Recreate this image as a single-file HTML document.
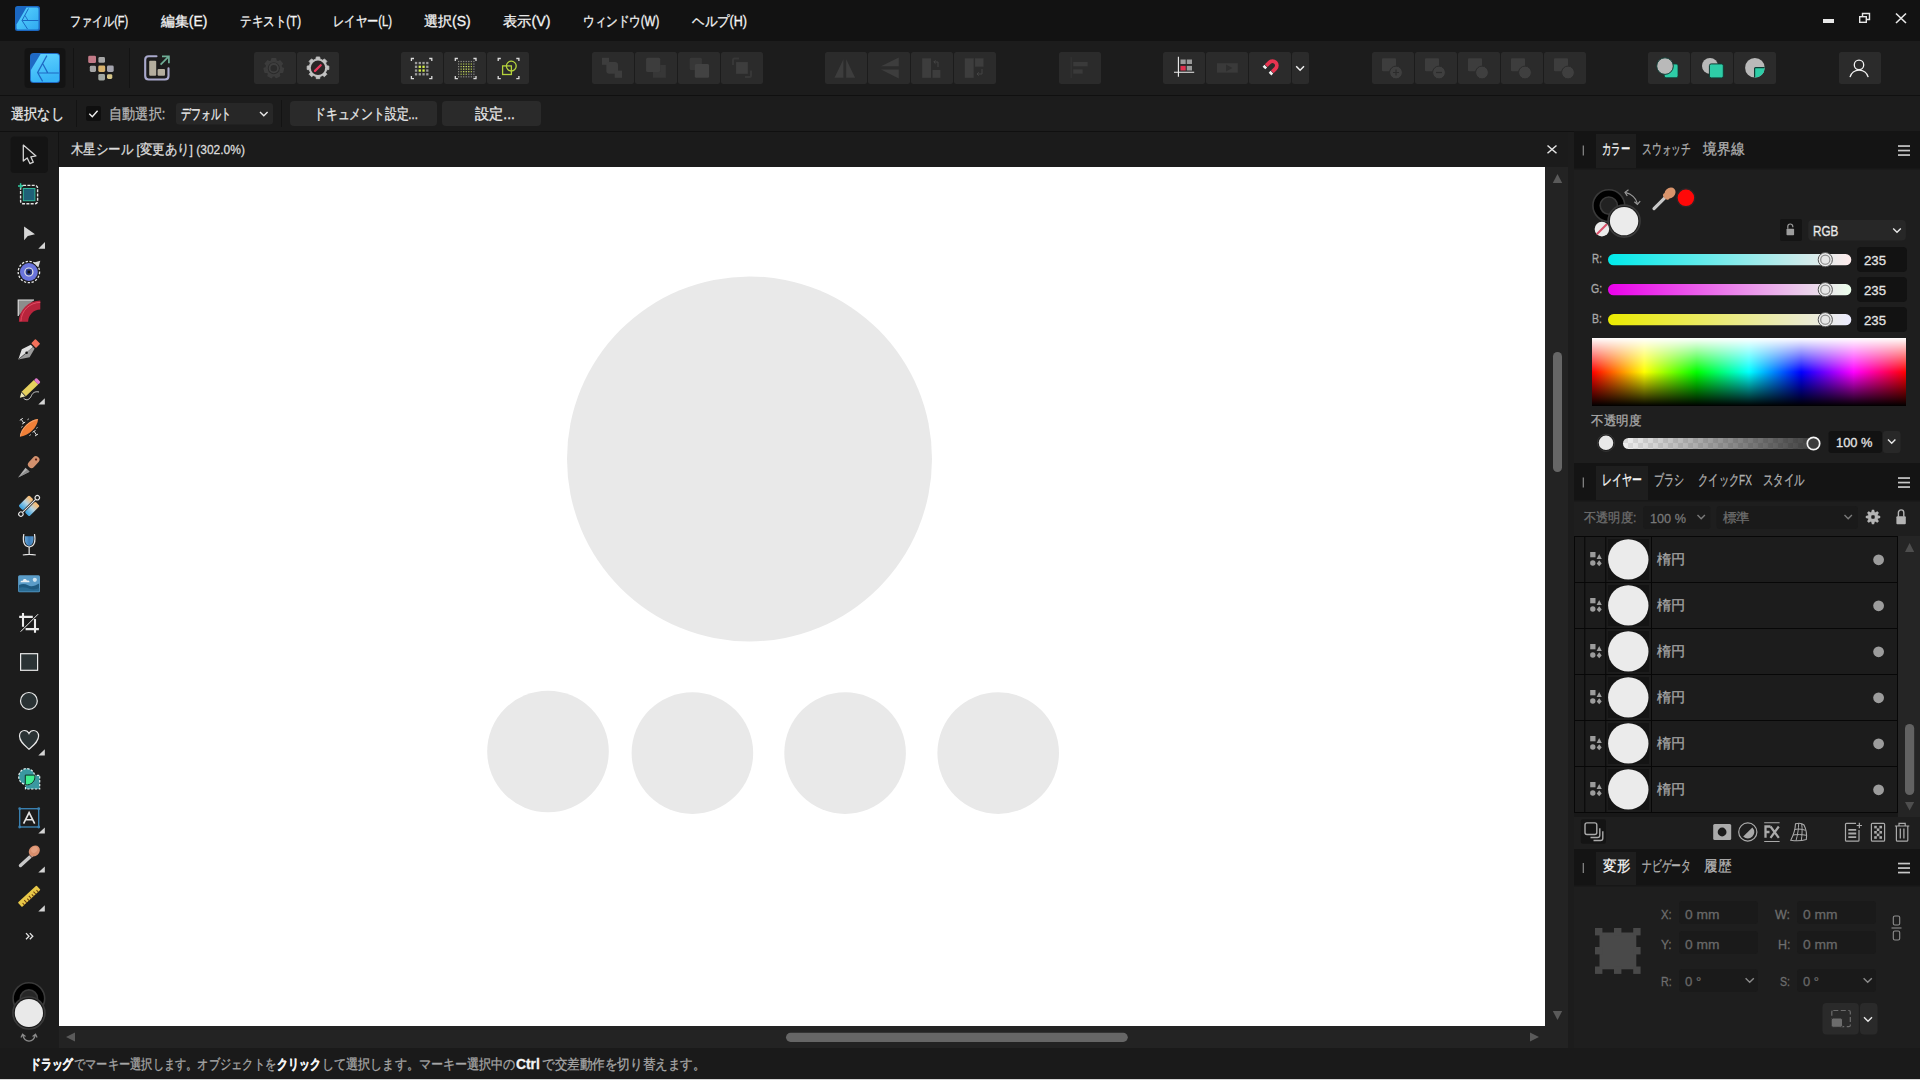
<!DOCTYPE html>
<html lang="ja"><head><meta charset="utf-8">
<style>
*{box-sizing:border-box;margin:0;padding:0}
html,body{width:1920px;height:1080px;overflow:hidden;background:#1c1c1c}
body{font-family:"Liberation Sans",sans-serif;font-size:14px;color:#e6e6e6;position:relative}
.a{position:absolute}
.t{position:absolute;white-space:nowrap;line-height:1;transform-origin:0 50%;-webkit-text-stroke:0.3px}
.btn{position:absolute;top:52px;width:42px;height:32px;background:#2b2b2b;border-radius:3px}
svg{position:absolute;overflow:visible}
</style></head><body>

<!-- menubar -->
<div class="a" id="menubar" style="left:0;top:0;width:1920px;height:41px;background:#121212"></div>
<!-- toolbar -->
<div class="a" id="toolbar" style="left:0;top:41px;width:1920px;height:54px;background:#1c1c1c"></div>
<div class="a" style="left:0;top:95px;width:1920px;height:1px;background:#101010"></div>
<!-- context bar -->
<div class="a" id="ctx" style="left:0;top:96px;width:1920px;height:35px;background:#1c1c1c"></div>
<div class="a" style="left:0;top:131px;width:1920px;height:1px;background:#101010"></div>
<!-- tools panel -->
<div class="a" id="tools" style="left:0;top:132px;width:59px;height:916px;background:#1c1c1c"></div>
<!-- doc tab -->
<div class="a" id="doctab" style="left:59px;top:132px;width:1509px;height:35px;background:#1b1b1b"></div>
<div class="a" style="left:58px;top:132px;width:1px;height:35px;background:#121212"></div>
<!-- canvas -->
<div class="a" id="canvas" style="left:59px;top:167px;width:1486px;height:859px;background:#fff"></div>
<!-- v scrollbar -->
<div class="a" id="vsb" style="left:1545px;top:167px;width:23px;height:881px;background:#232323"></div>
<!-- h scrollbar -->
<div class="a" id="hsb" style="left:59px;top:1026px;width:1486px;height:22px;background:#232323"></div>
<!-- gap -->
<div class="a" style="left:1568px;top:132px;width:6px;height:916px;background:#1c1c1c"></div>
<!-- right panel -->
<div class="a" id="rp" style="left:1574px;top:132px;width:346px;height:916px;background:#1e1e1e"></div>
<!-- status -->
<div class="a" id="status" style="left:0;top:1048px;width:1920px;height:31px;background:#1a1a1a"></div>
<div class="a" style="left:0;top:1079px;width:1920px;height:1px;background:#d8d8d8"></div>
<!-- canvas shapes -->
<svg class="a" style="left:0;top:0" width="1920" height="1080">
<circle cx="749.5" cy="458.9" r="182.5" fill="#e9e9e9"/>
<circle cx="548" cy="751.5" r="60.8" fill="#e9e9e9"/>
<circle cx="692.4" cy="753.1" r="60.8" fill="#e9e9e9"/>
<circle cx="845.1" cy="753.1" r="60.8" fill="#e9e9e9"/>
<circle cx="998.2" cy="753.1" r="60.8" fill="#e9e9e9"/>
<!-- v scrollbar -->
<path d="M1557.5 174 L1562.2 183 L1552.8 183 Z" fill="#5a5a5a"/>
<rect x="1553" y="352" width="9" height="120" rx="4.500" fill="#666"/>
<path d="M1557.5 1020 L1562.2 1011 L1552.8 1011 Z" fill="#5a5a5a"/>
<!-- h scrollbar -->
<path d="M66 1037 L75 1032.5 L75 1041.5 Z" fill="#5a5a5a"/>
<path d="M1539 1037 L1530 1032.5 L1530 1041.5 Z" fill="#5a5a5a"/>
<rect x="786" y="1032.800" width="341.800" height="9.100" rx="4.550" fill="#666"/>
</svg>

<!-- menubar content -->
<svg style="left:15px;top:6px" width="25" height="25" viewBox="0 0 25 25">
<defs><linearGradient id="lg1" x1="0" y1="0" x2="1" y2="1"><stop offset="0" stop-color="#5ad6ff"/><stop offset="1" stop-color="#2fa8f0"/></linearGradient></defs>
<rect x="0" y="0" width="25" height="25" rx="2.5" fill="#1b68c2"/>
<path d="M11.5 1.5 H22 Q23.5 1.5 23.5 3 V22 Q23.5 23.5 22 23.5 H3 Q1.5 23.5 1.5 22 V18.5 Z" fill="url(#lg1)"/>
<path d="M13.5 2.5 L7 14.5 L12.5 23" stroke="#1b68c2" stroke-width="1" fill="none"/>
<path d="M7.2 14.5 H23.5" stroke="#1b68c2" stroke-width="1" fill="none"/>
<path d="M10 9.5 L13 14.5" stroke="#1b68c2" stroke-width="0.9" fill="none"/>
</svg>
<svg style="left:0;top:0" width="1920" height="41">
<rect x="1823" y="19" width="11" height="4" fill="#e8e8e8"/>
<path d="M1862.5 16.5 V13.5 H1869.5 V19.500 H1866.5" stroke="#e8e8e8" stroke-width="1.4" fill="none"/>
<rect x="1859.700" y="16.700" width="6.600" height="5.600" stroke="#e8e8e8" stroke-width="1.4" fill="none"/>
<path d="M1896 13.500 L1906 23 M1906 13.500 L1896 23" stroke="#e8e8e8" stroke-width="1.600" fill="none"/>
</svg>


<!-- toolbar icons -->
<svg style="left:0;top:0" width="1920" height="96">
<rect x="24.5" y="48" width="41" height="40" rx="4" fill="#131313"/>
<defs><linearGradient id="lg2" x1="0" y1="0" x2="0.3" y2="1"><stop offset="0" stop-color="#62d4ff"/><stop offset="1" stop-color="#37b4f6"/></linearGradient></defs>
<g transform="translate(30,53)">
<rect x="0" y="0" width="30" height="30" rx="3.5" fill="#1f69c4"/>
<path d="M10.6 0.9 H26.6 Q29.1 0.9 29.1 3.4 V26.6 Q29.1 29.1 26.6 29.1 H3.4 Q0.9 29.1 0.9 26.6 V17 Z" fill="url(#lg2)"/>
<path d="M16.9 2.6 L7.6 19.6 L12.6 28.4 M7.9 20 H28.9 M12.9 11 L17.6 19.6" stroke="#1f69c4" stroke-width="1.2" fill="none"/>
</g>
<rect x="73" y="48" width="1" height="40" fill="#131313"/>
<rect x="129" y="48" width="1" height="40" fill="#131313"/>
<rect x="88.2" y="55.7" width="7.8" height="7.4" rx="1.4" fill="#c27a87"/>
<rect x="98.4" y="57" width="6.6" height="5.8" rx="1.4" fill="#a6a6a6"/>
<rect x="89.8" y="65.8" width="6.2" height="6.1" rx="1.4" fill="#a4a4a4"/>
<rect x="98.3" y="65.5" width="6.9" height="6.4" rx="1.4" fill="#d8b26c"/>
<rect x="107" y="65.5" width="6.7" height="6.4" rx="1.4" fill="#a4a4ae"/>
<rect x="98.3" y="74" width="6.7" height="6.5" rx="1.4" fill="#a2a8a2"/>
<rect x="107" y="74.2" width="5.3" height="4.8" rx="1.4" fill="#d6c688"/>
<path d="M156.5 56.3 H148.7 Q145.2 56.3 145.2 59.8 V76 Q145.2 79.5 148.7 79.5 H165 Q168.5 79.5 168.5 76 V68.4" stroke="#a9a9cc" stroke-width="2.1" fill="none" stroke-linecap="round"/>
<rect x="149.2" y="60.7" width="7" height="15" rx="1" fill="#b4ae9e"/>
<rect x="157.6" y="69" width="7.4" height="6.7" rx="1" fill="#b4ae9e"/>
<path d="M160.6 64.6 L168.8 56.4 M162 56.4 H168.9 V63.2" stroke="#6fae96" stroke-width="1.7" fill="none"/>
<rect x="254" y="52" width="42" height="32" rx="2.500" fill="#2b2b2b"/>
<rect x="297" y="52" width="42" height="32" rx="2.500" fill="#2b2b2b"/>
<path d="M271.67 60.90 L271.92 58.79 L275.68 58.79 L275.93 60.90 L278.18 61.99 L279.99 60.86 L282.33 63.80 L280.83 65.32 L281.39 67.75 L283.40 68.46 L282.56 72.13 L280.44 71.90 L278.88 73.85 L279.58 75.86 L276.19 77.50 L275.05 75.70 L272.55 75.70 L271.41 77.50 L268.02 75.86 L268.72 73.85 L267.16 71.90 L265.04 72.13 L264.20 68.46 L266.21 67.75 L266.77 65.32 L265.27 63.80 L267.61 60.86 L269.42 61.99 Z" fill="#3c3c3c" stroke="#3c3c3c" stroke-width="1.5" stroke-linejoin="round"/>
<circle cx="273.8" cy="68.2" r="6" fill="#2b2b2b"/>
<circle cx="273.8" cy="68.2" r="4.2" fill="none" stroke="#3f3f3f" stroke-width="1.8"/>
<path d="M315.99 59.03 L316.28 56.94 L319.72 56.94 L320.01 59.03 L322.78 60.17 L324.47 58.90 L326.90 61.33 L325.63 63.02 L326.77 65.79 L328.86 66.08 L328.86 69.52 L326.77 69.81 L325.63 72.58 L326.90 74.27 L324.47 76.70 L322.78 75.43 L320.01 76.57 L319.72 78.66 L316.28 78.66 L315.99 76.57 L313.22 75.43 L311.53 76.70 L309.10 74.27 L310.37 72.58 L309.23 69.81 L307.14 69.52 L307.14 66.08 L309.23 65.79 L310.37 63.02 L309.10 61.33 L311.53 58.90 L313.22 60.17 Z" fill="#c2c2c2" stroke="#c2c2c2" stroke-width="0.8" stroke-linejoin="round"/>
<circle cx="318" cy="67.8" r="7.2" fill="#2a2626"/>
<path d="M315 70.900 L320.700 65.300" stroke="#e8385e" stroke-width="2.3" stroke-linecap="round"/>
<rect x="401" y="52" width="42" height="32" rx="2.500" fill="#2b2b2b"/>
<rect x="444" y="52" width="42" height="32" rx="2.500" fill="#2b2b2b"/>
<rect x="487" y="52" width="42" height="32" rx="2.500" fill="#2b2b2b"/>
<path d="M411.4 61.1 V58.5 H414.0 M429.2 58.5 H431.8 V61.1 M431.8 76.10000000000001 V78.7 H429.2 M414.0 78.7 H411.4 V76.10000000000001" stroke="#dcdcdc" stroke-width="1.3" fill="none"/>
<rect x="414.90" y="61.90" width="2.3" height="2.3" fill="#9c9c9c"/>
<rect x="418.65" y="61.90" width="2.3" height="2.3" fill="#9c9c9c"/>
<rect x="422.40" y="61.90" width="2.3" height="2.3" fill="#9c9c9c"/>
<rect x="426.15" y="61.90" width="2.3" height="2.3" fill="#9c9c9c"/>
<rect x="414.90" y="65.65" width="2.3" height="2.3" fill="#9c9c9c"/>
<rect x="418.65" y="65.65" width="2.3" height="2.3" fill="#d6f04e"/>
<rect x="422.40" y="65.65" width="2.3" height="2.3" fill="#d6f04e"/>
<rect x="426.15" y="65.65" width="2.3" height="2.3" fill="#9c9c9c"/>
<rect x="414.90" y="69.40" width="2.3" height="2.3" fill="#9c9c9c"/>
<rect x="418.65" y="69.40" width="2.3" height="2.3" fill="#d6f04e"/>
<rect x="422.40" y="69.40" width="2.3" height="2.3" fill="#d6f04e"/>
<rect x="426.15" y="69.40" width="2.3" height="2.3" fill="#9c9c9c"/>
<rect x="414.90" y="73.15" width="2.3" height="2.3" fill="#9c9c9c"/>
<rect x="418.65" y="73.15" width="2.3" height="2.3" fill="#9c9c9c"/>
<rect x="422.40" y="73.15" width="2.3" height="2.3" fill="#9c9c9c"/>
<rect x="426.15" y="73.15" width="2.3" height="2.3" fill="#9c9c9c"/>
<path d="M455.3 61.1 V58.5 H457.90000000000003 M473.4 58.5 H476 V61.1 M476 76.10000000000001 V78.7 H473.4 M457.90000000000003 78.7 H455.3 V76.10000000000001" stroke="#dcdcdc" stroke-width="1.3" fill="none"/>
<rect x="458.00" y="60.90" width="1.2" height="1.2" fill="#8e8e86"/>
<rect x="460.55" y="60.90" width="1.2" height="1.2" fill="#8e8e86"/>
<rect x="463.10" y="60.90" width="1.2" height="1.2" fill="#8e8e86"/>
<rect x="465.65" y="60.90" width="1.2" height="1.2" fill="#8e8e86"/>
<rect x="468.20" y="60.90" width="1.2" height="1.2" fill="#8e8e86"/>
<rect x="470.75" y="60.90" width="1.2" height="1.2" fill="#8e8e86"/>
<rect x="473.30" y="60.90" width="1.2" height="1.2" fill="#8a8a8a"/>
<rect x="458.00" y="63.45" width="1.2" height="1.2" fill="#8e8e86"/>
<rect x="460.55" y="63.45" width="1.2" height="1.2" fill="#b4c850"/>
<rect x="463.10" y="63.45" width="1.2" height="1.2" fill="#b4c850"/>
<rect x="465.65" y="63.45" width="1.2" height="1.2" fill="#b4c850"/>
<rect x="468.20" y="63.45" width="1.2" height="1.2" fill="#b4c850"/>
<rect x="470.75" y="63.45" width="1.2" height="1.2" fill="#b4c850"/>
<rect x="473.30" y="63.45" width="1.2" height="1.2" fill="#8a8a8a"/>
<rect x="458.00" y="66.00" width="1.2" height="1.2" fill="#8e8e86"/>
<rect x="460.55" y="66.00" width="1.2" height="1.2" fill="#b4c850"/>
<rect x="463.10" y="66.00" width="1.2" height="1.2" fill="#e0f46a"/>
<rect x="465.65" y="66.00" width="1.2" height="1.2" fill="#e0f46a"/>
<rect x="468.20" y="66.00" width="1.2" height="1.2" fill="#e0f46a"/>
<rect x="470.75" y="66.00" width="1.2" height="1.2" fill="#b4c850"/>
<rect x="473.30" y="66.00" width="1.2" height="1.2" fill="#8a8a8a"/>
<rect x="458.00" y="68.55" width="1.2" height="1.2" fill="#8e8e86"/>
<rect x="460.55" y="68.55" width="1.2" height="1.2" fill="#b4c850"/>
<rect x="463.10" y="68.55" width="1.2" height="1.2" fill="#e0f46a"/>
<rect x="465.65" y="68.55" width="1.2" height="1.2" fill="#e0f46a"/>
<rect x="468.20" y="68.55" width="1.2" height="1.2" fill="#e0f46a"/>
<rect x="470.75" y="68.55" width="1.2" height="1.2" fill="#b4c850"/>
<rect x="473.30" y="68.55" width="1.2" height="1.2" fill="#8a8a8a"/>
<rect x="458.00" y="71.10" width="1.2" height="1.2" fill="#8e8e86"/>
<rect x="460.55" y="71.10" width="1.2" height="1.2" fill="#b4c850"/>
<rect x="463.10" y="71.10" width="1.2" height="1.2" fill="#e0f46a"/>
<rect x="465.65" y="71.10" width="1.2" height="1.2" fill="#e0f46a"/>
<rect x="468.20" y="71.10" width="1.2" height="1.2" fill="#e0f46a"/>
<rect x="470.75" y="71.10" width="1.2" height="1.2" fill="#b4c850"/>
<rect x="473.30" y="71.10" width="1.2" height="1.2" fill="#8a8a8a"/>
<rect x="458.00" y="73.65" width="1.2" height="1.2" fill="#8e8e86"/>
<rect x="460.55" y="73.65" width="1.2" height="1.2" fill="#b4c850"/>
<rect x="463.10" y="73.65" width="1.2" height="1.2" fill="#b4c850"/>
<rect x="465.65" y="73.65" width="1.2" height="1.2" fill="#b4c850"/>
<rect x="468.20" y="73.65" width="1.2" height="1.2" fill="#8a8a8a"/>
<rect x="470.75" y="73.65" width="1.2" height="1.2" fill="#8a8a8a"/>
<rect x="473.30" y="73.65" width="1.2" height="1.2" fill="#8a8a8a"/>
<rect x="458.00" y="76.20" width="1.2" height="1.2" fill="#8e8e86"/>
<rect x="460.55" y="76.20" width="1.2" height="1.2" fill="#8e8e86"/>
<rect x="463.10" y="76.20" width="1.2" height="1.2" fill="#8e8e86"/>
<rect x="465.65" y="76.20" width="1.2" height="1.2" fill="#8e8e86"/>
<rect x="468.20" y="76.20" width="1.2" height="1.2" fill="#8a8a8a"/>
<rect x="470.75" y="76.20" width="1.2" height="1.2" fill="#8a8a8a"/>
<rect x="473.30" y="76.20" width="1.2" height="1.2" fill="#8a8a8a"/>
<path d="M498.2 61.1 V58.5 H500.8 M516.3 58.5 H518.9 V61.1 M518.9 76.10000000000001 V78.7 H516.3 M500.8 78.7 H498.2 V76.10000000000001" stroke="#dcdcdc" stroke-width="1.3" fill="none"/>
<rect x="502.6" y="65.9" width="8.8" height="8.6" fill="none" stroke="#b6d43c" stroke-width="1.3"/>
<circle cx="511.3" cy="66.1" r="4.9" fill="none" stroke="#b6d43c" stroke-width="1.3"/>
<rect x="592" y="52" width="42" height="32" rx="2.500" fill="#2b2b2b"/>
<rect x="635" y="52" width="42" height="32" rx="2.500" fill="#2b2b2b"/>
<rect x="678" y="52" width="42" height="32" rx="2.500" fill="#2b2b2b"/>
<rect x="721" y="52" width="42" height="32" rx="2.500" fill="#2b2b2b"/>
<rect x="602" y="57.8" width="7" height="7" fill="#3d3d3d"/><rect x="606.3" y="62" width="11.7" height="11.8" rx="3" fill="#3d3d3d"/><rect x="614.7" y="70.6" width="7.3" height="7.2" fill="#3d3d3d"/>
<path d="M660.2 65 H665.8 V77.8 H653 V72 H660.2 Z" fill="#373737"/><rect x="646.1" y="57.8" width="14.1" height="14.1" rx="1.5" fill="#3d3d3d"/>
<rect x="689.7" y="57.8" width="12.2" height="12.2" rx="1.5" fill="#373737"/><rect x="694.8" y="63.9" width="14.3" height="13.9" rx="1.5" fill="#424242"/>
<path d="M733 65 V60 Q733 58.500 734.5 58.500 H739" stroke="#373737" stroke-width="2" fill="none"/><path d="M751 70.5 V75.500 Q751 77 749.5 77 H745" stroke="#373737" stroke-width="2" fill="none"/><rect x="736.1" y="62.1" width="11.7" height="11.700" fill="#3d3d3d"/>
<rect x="825" y="52" width="42" height="32" rx="2.500" fill="#2b2b2b"/>
<rect x="868" y="52" width="42" height="32" rx="2.500" fill="#2b2b2b"/>
<rect x="911" y="52" width="42" height="32" rx="2.500" fill="#2b2b2b"/>
<rect x="954" y="52" width="42" height="32" rx="2.500" fill="#2b2b2b"/>
<path d="M834.5 77.8 H843.4 V59.2 Z M846.2 59.2 V77.8 H855.1 Z" fill="#3d3d3d"/>
<path d="M881 66.2 L898.8 57.4 V66.2 Z M881 69.600 H898.8 V78.400 Z" fill="#3d3d3d"/>
<rect x="922.2" y="58.3" width="8.8" height="19.5" fill="#3d3d3d"/><rect x="932.500" y="70" width="7.900" height="7.8" fill="#3d3d3d"/><path d="M934 62 H938 V67 M935.500 60.300 L933.800 62 L935.500 63.700" stroke="#454545" stroke-width="1" fill="none"/>
<rect x="964.8" y="58.3" width="8.9" height="19.5" fill="#3d3d3d"/><rect x="975.100" y="58.3" width="8.400" height="8.400" fill="#3d3d3d"/><path d="M982 69 V74 H977 M978.700 72.300 L977 74 L978.700 75.700" stroke="#454545" stroke-width="1" fill="none"/>
<rect x="1059" y="52" width="42" height="32" rx="2.500" fill="#2b2b2b"/>
<rect x="1070.600" y="57.100" width="1" height="21" fill="#363636"/><rect x="1073.200" y="62" width="14.500" height="4.300" fill="#3a3a3a"/><rect x="1073.200" y="69.400" width="9.400" height="4.300" fill="#3a3a3a"/>
<rect x="1163" y="52" width="42" height="32" rx="2.500" fill="#2b2b2b"/>
<rect x="1206" y="52" width="42" height="32" rx="2.500" fill="#2b2b2b"/>
<rect x="1249" y="52" width="42" height="32" rx="2.500" fill="#2b2b2b"/>
<rect x="1292" y="52" width="17" height="32" rx="2.500" fill="#2b2b2b"/>
<path d="M1178.400 56.700 V76.800 M1174 72.300 H1194.200" stroke="#f0f0f0" stroke-width="1.100" fill="none"/>
<rect x="1180.500" y="59.500" width="5.200" height="4.500" fill="#9a9a9a"/><rect x="1186.800" y="59.500" width="5.200" height="4.500" fill="#9a9a9a"/><rect x="1180.500" y="65.900" width="5.200" height="4.600" fill="#e0304e"/><rect x="1186.800" y="65.900" width="5.200" height="4.600" fill="#9a9a9a"/>
<rect x="1217" y="63.200" width="20.800" height="9.400" fill="#3a3a3a"/><path d="M1226 64.500 L1232.500 68 L1226 71.500 Z" fill="#2e2e2e"/>
<g transform="translate(1272.500,65.500) rotate(45)"><path d="M-4.300 4.600 V0 A4.300 4.300 0 0 1 4.300 0 V4.600" stroke="#e83450" stroke-width="3.800" fill="none"/><path d="M-4.300 5.200 V7.800 M4.300 5.200 V7.800" stroke="#f2f2f2" stroke-width="3.800" fill="none"/></g>
<path d="M1296.200 66.300 L1300.100 70.200 L1304 66.300" stroke="#f0f0f0" stroke-width="1.500" fill="none"/>
<rect x="1372" y="52" width="42" height="32" rx="2.500" fill="#2b2b2b"/>
<rect x="1382" y="58.3" width="14" height="13" rx="1" fill="#3d3d3d"/>
<circle cx="1396" cy="72.500" r="6.400" fill="#3f3f3f" stroke="#2b2b2b" stroke-width="1"/>
<path d="M1393 72.500 H1399 M1396 69.500 V75.500" stroke="#2b2b2b" stroke-width="1.200"/>
<rect x="1415" y="52" width="42" height="32" rx="2.500" fill="#2b2b2b"/>
<rect x="1425" y="58.3" width="14" height="13" rx="1" fill="#3d3d3d"/>
<circle cx="1439" cy="72.500" r="6.400" fill="#3f3f3f" stroke="#2b2b2b" stroke-width="1"/>
<path d="M1436 72.500 H1442" stroke="#2b2b2b" stroke-width="1.200"/>
<rect x="1458" y="52" width="42" height="32" rx="2.500" fill="#2b2b2b"/>
<rect x="1468" y="58.3" width="14" height="13" rx="1" fill="#3d3d3d"/>
<circle cx="1482" cy="72.500" r="6.400" fill="#3f3f3f" stroke="#2b2b2b" stroke-width="1"/>
<rect x="1501" y="52" width="42" height="32" rx="2.500" fill="#2b2b2b"/>
<rect x="1511" y="58.3" width="14" height="13" rx="1" fill="#3d3d3d"/>
<circle cx="1525" cy="72.500" r="6.400" fill="#3f3f3f" stroke="#2b2b2b" stroke-width="1"/>
<rect x="1544" y="52" width="42" height="32" rx="2.500" fill="#2b2b2b"/>
<rect x="1554" y="58.3" width="14" height="13" rx="1" fill="#3d3d3d"/>
<circle cx="1568" cy="72.500" r="6.400" fill="#3f3f3f" stroke="#2b2b2b" stroke-width="1"/>
<rect x="1648" y="52" width="42" height="32" rx="2.500" fill="#2b2b2b"/>
<rect x="1691" y="52" width="42" height="32" rx="2.500" fill="#2b2b2b"/>
<rect x="1734" y="52" width="42" height="32" rx="2.500" fill="#2b2b2b"/>
<rect x="1664.300" y="64" width="13.700" height="13.700" rx="1.800" fill="#2ecda7" stroke="#0f3d35" stroke-width="0.800"/>
<circle cx="1665" cy="66.100" r="8.300" fill="#b9b9b9" stroke="#0f3d35" stroke-width="1"/>
<circle cx="1710" cy="65.900" r="8" fill="#b9b9b9"/>
<rect x="1709.400" y="63.900" width="13.900" height="14" rx="1.800" fill="#2ecda7" stroke="#0f3d35" stroke-width="1"/>
<clipPath id="cp3"><circle cx="1754.900" cy="67.800" r="9.800"/></clipPath>
<circle cx="1754.900" cy="67.800" r="9.800" fill="#b9b9b9"/>
<rect x="1754.600" y="67.600" width="14" height="14" rx="1" fill="#2ecda7" stroke="#0f3d35" stroke-width="1.200" clip-path="url(#cp3)"/>
<rect x="1839" y="52" width="42" height="32" rx="2.500" fill="#2b2b2b"/>
<circle cx="1859" cy="64.900" r="4.700" fill="none" stroke="#f2f2f2" stroke-width="1.300"/>
<path d="M1850 77.200 A9.400 9.400 0 0 1 1868.200 77.200" fill="none" stroke="#f2f2f2" stroke-width="1.300"/>
</svg>
<!-- context bar controls + tools -->
<svg style="left:0;top:0" width="1920" height="1080">
<defs>
<linearGradient id="gfill" x1="0" y1="1" x2="1" y2="0"><stop offset="0.15" stop-color="#4aa8e0"/><stop offset="0.5" stop-color="#a8d0e8"/><stop offset="0.85" stop-color="#f4bc78"/></linearGradient>
<linearGradient id="gglass" x1="0" y1="0" x2="1" y2="0"><stop offset="0" stop-color="#6aa8d8"/><stop offset="0.5" stop-color="#3c7cb8"/><stop offset="1" stop-color="#5a98cc"/></linearGradient>
</defs>
<!-- context bar -->
<rect x="76" y="100" width="1" height="27" fill="#131313"/>
<rect x="86" y="106" width="15" height="15" rx="2" fill="#0f0f0f"/>
<path d="M89.300 113.800 L92.300 116.800 L97.600 110.700" stroke="#f0f0f0" stroke-width="1.400" fill="none"/>
<rect x="176" y="103" width="97" height="21.500" rx="3" fill="#272727"/>
<path d="M260 112 L263.800 115.800 L267.600 112" stroke="#e8e8e8" stroke-width="1.400" fill="none"/>
<rect x="281" y="100" width="1" height="27" fill="#131313"/>
<rect x="290" y="101" width="147" height="25" rx="4" fill="#2a2a2a"/>
<rect x="442" y="101" width="99" height="25" rx="4" fill="#2a2a2a"/>
<!-- doc tab close -->
<path d="M1547.500 145.500 L1556.500 153.300 M1556.500 145.500 L1547.500 153.300" stroke="#e4e4e4" stroke-width="1.500"/>

<!-- tools -->
<rect x="10.500" y="136.500" width="37.500" height="36.500" rx="4" fill="#141414"/>
<path d="M23.300 145.100 V161.100 L27.200 158 L30 163.700 L33.300 162.200 L30.900 156.900 L36 155.900 Z" fill="#141414" stroke="#d4d4d4" stroke-width="1.300" stroke-linejoin="round"/>
<!-- artboard -->
<rect x="20.600" y="185.400" width="17" height="18.300" rx="2.500" fill="none" stroke="#e4e4e4" stroke-width="1.400" stroke-dasharray="3 1.300"/>
<rect x="23.300" y="188.500" width="11.600" height="12.200" fill="#1f6078" stroke="#33b79a" stroke-width="1"/>
<path d="M18 185.900 H23.200 M20.600 183.300 V188.500" stroke="#2fc9a0" stroke-width="1.500"/>
<!-- node tool -->
<path d="M24.100 226.400 V240.300 L27.800 235.900 L35 234.200 Z" fill="#d6d6d6"/>
<path d="M38.300 248.700 H45 V242 Z" fill="#d4d4d4"/>
<!-- point transform -->
<circle cx="28.900" cy="272" r="10.700" fill="none" stroke="#e8e8e8" stroke-width="1.300" stroke-dasharray="2.300 1.600"/>
<circle cx="28.900" cy="272" r="8.900" fill="#6a74dc"/>
<circle cx="28.900" cy="272" r="4" fill="#2a3a8a" stroke="#e8e8e8" stroke-width="1.200"/>
<rect x="27.500" y="270.600" width="2.800" height="2.800" fill="#101010"/>
<path d="M33.300 262.800 L40.300 260.700 L38.400 267.300 Z" fill="#d8d8d8"/>
<!-- corner tool -->
<path d="M18.200 300 H34 L18.200 316 Z" fill="#8c8c8c"/>
<path d="M18.200 316 V300 H34" fill="none" stroke="#e4e4e4" stroke-width="1.100"/>
<path d="M18.900 321.800 A21.400 21.400 0 0 1 40.300 300.400 V309.600 A12.200 12.200 0 0 0 28.100 321.800 Z" fill="#b8243c"/>
<path d="M20.900 321.300 A19.400 19.400 0 0 1 40.300 302.400" fill="none" stroke="#e85068" stroke-width="0.900"/>
<!-- pen tool -->
<g transform="translate(35.700,343.500) rotate(45)"><rect x="-3.400" y="-3" width="6.800" height="6" rx="0.800" fill="#f2705a"/></g>
<path d="M18.300 359.400 L21.800 349.300 L30.800 344.800 L33 347 Z" fill="#e0e0e0"/>
<path d="M18.300 359.400 L33 347 L34.600 348.700 L29.600 357.200 Z" fill="#9c9c9c"/>
<circle cx="26.600" cy="352.700" r="1.300" fill="#111"/>
<path d="M18.300 359.400 L26 353.200" stroke="#444" stroke-width="0.700"/>
<!-- pencil -->
<g transform="translate(29.500,388.500) rotate(-43.500)">
<rect x="-8" y="-3.100" width="17" height="6.200" fill="#e6d05e"/>
<path d="M-8 -3.100 L-13.300 0 L-8 3.100 Z" fill="#ece6b8"/>
<rect x="9" y="-3.100" width="3.400" height="6.200" rx="1.200" fill="#e07acc"/>
<path d="M-8.300 -3.100 V3.100" stroke="#1c1c1c" stroke-width="0.800"/>
</g>
<path d="M23.600 398.300 C27 401.500 30 399 31.500 395.500 C33 392 36 391.300 39 392" fill="none" stroke="#d8d8d8" stroke-width="0.900"/>
<path d="M38.300 404.400 H44.800 V398.200 Z" fill="#d4d4d4"/>
<!-- vector brush/width tool -->
<path d="M20 436.700 C20.500 428 30 419.800 38.100 419.100 C37.500 427.500 28.500 436.300 20 436.700 Z" fill="#f08038"/>
<path d="M20.400 436.300 C21 428.500 30 420.500 37.600 419.600" fill="none" stroke="#f8b080" stroke-width="0.800"/>
<g stroke="#e0e0e0" stroke-width="1" fill="none">
<path d="M19.800 420.300 L22.800 418.300 M21.300 419.300 L23.700 423 M22.200 424 L25.200 422 M21.300 427.300 L22.500 426.500 M27.500 419.700 L28.800 418.900"/>
<path d="M32.600 432.300 L35.600 430.300 M34.100 431.300 L36.500 435 M35 436 L38 434 M29.500 435.500 L30.700 434.700 M36.300 428.300 L37.500 427.500"/>
</g>
<!-- knife -->
<path d="M18.100 477.500 L25.500 467.700 L29.500 471.700 Z" fill="#b4b4b4"/>
<path d="M18.100 477.500 L27.400 469.600 L29.500 471.700 Z" fill="#8e8e8e"/>
<g transform="translate(33.500,462.300) rotate(-48)"><rect x="-6.500" y="-3.500" width="13.500" height="7" rx="3.300" fill="#d2916e"/><circle cx="3.800" cy="0" r="1.100" fill="#5a1c14"/></g>
<!-- gradient tool -->
<g transform="translate(29.100,505.900) rotate(-45)">
<rect x="-7.500" y="-7.600" width="15" height="6.300" rx="1.500" fill="url(#gfill2)"/>
<rect x="-7.500" y="1.300" width="15" height="6.300" rx="1.500" fill="url(#gfill2)"/>
<path d="M-9.300 0 H9.300" stroke="#e8e8e8" stroke-width="1.100"/>
<circle cx="-11.600" cy="0" r="2.200" fill="#1c1c1c" stroke="#e8e8e8" stroke-width="1.100"/>
<circle cx="11.600" cy="0" r="2.200" fill="#1c1c1c" stroke="#e8e8e8" stroke-width="1.100"/>
</g>
<defs><linearGradient id="gfill2" x1="0" y1="0" x2="1" y2="0"><stop offset="0.100" stop-color="#4aa8e0"/><stop offset="0.500" stop-color="#b4d4e4"/><stop offset="0.900" stop-color="#f4bc78"/></linearGradient></defs>
<!-- transparency (glass) -->
<path d="M24.800 536.200 H33.500 C33.800 541 33 545 29.150 546.100 C25.300 545 24.500 541 24.800 536.200 Z" fill="url(#gglass)"/>
<path d="M23.800 534 C22.500 541.500 23.800 546.300 29.150 547 C34.500 546.300 35.800 541.500 34.500 534" fill="none" stroke="#e4e4e4" stroke-width="1.200"/>
<path d="M29.150 547 V554.300 M22.800 555 C26 554.300 32.300 554.300 35.800 555" fill="none" stroke="#e4e4e4" stroke-width="1.200"/>
<!-- place image -->
<rect x="18.100" y="575.300" width="21.900" height="17" rx="1.500" fill="#5a9cc8"/>
<path d="M19 592.300 V586 C22 584.500 25 584.500 28 586.300 C31 588 35 587 39.100 584.500 V592.300 Z" fill="#1e5a80" transform="translate(0,-1)"/>
<path d="M18.800 591.300 V588 C23 586.500 27 588 30 589 C34 590 37 589 39.300 588 V591.300 Z" fill="#2a6c94"/>
<circle cx="34.800" cy="579.800" r="2.100" fill="#cfe4f0"/>
<path d="M20.600 582.300 H29.600 C29.600 580.500 27.800 580.300 27 580.800 C26.500 578.300 22.800 578.500 22.800 580.800 C21.300 580.500 20.300 581.300 20.600 582.300 Z" fill="#e8eef2"/>
<!-- crop -->
<path d="M23 613.100 V626.700 M19.200 616.900 H32.800 M35 618.900 V632.800 M25.600 629.100 H38.900" stroke="#ececec" stroke-width="2.100" fill="none"/>
<path d="M20.600 631.700 L38.100 614.200" stroke="#ececec" stroke-width="1"/>
<!-- rect -->
<rect x="20.600" y="653.700" width="17" height="16.600" fill="#2a3234" stroke="#e8e8e8" stroke-width="1.200"/>
<!-- ellipse -->
<circle cx="28.900" cy="700.900" r="8.400" fill="#2a3234" stroke="#e8e8e8" stroke-width="1.200"/>
<!-- heart -->
<path d="M29 749.300 C24.500 745.300 19.500 741.500 19.500 736 C19.500 732.500 22 730.500 24.400 730.500 C26.500 730.500 28.200 731.800 29 733.500 C29.800 731.800 31.500 730.500 33.600 730.500 C36 730.500 38.600 732.500 38.600 736 C38.600 741.500 33.500 745.300 29 749.300 Z" fill="#2a3234" stroke="#e8e8e8" stroke-width="1.200"/>
<path d="M38.300 755.400 H44.800 V749.300 Z" fill="#d4d4d4"/>
<!-- shape builder -->
<rect x="25.500" y="775.300" width="14.200" height="13.700" fill="#3a98a0" stroke="#e4f0f0" stroke-width="1.200" stroke-dasharray="2.300 1.500"/>
<circle cx="26.700" cy="776.600" r="8" fill="#3a98a0" stroke="#e4f0f0" stroke-width="1.200" stroke-dasharray="2.300 1.500"/>
<path d="M25.300 775.100 H34.800 A8.200 8.200 0 0 1 25.300 784.800 Z" fill="#40f090" stroke="#0c2c24" stroke-width="1"/>
<!-- text tool -->
<rect x="19.700" y="808.700" width="19" height="18.300" fill="none" stroke="#3a80b0" stroke-width="1.400"/>
<g fill="#3a80b0"><circle cx="19.700" cy="808.700" r="1.400"/><circle cx="38.700" cy="808.700" r="1.400"/><circle cx="19.700" cy="827" r="1.400"/><circle cx="38.700" cy="827" r="1.400"/></g>
<path d="M23.600 823.700 L29.100 812.600 L34.700 823.700 M25.500 819.800 H32.700" fill="none" stroke="#e4e4e4" stroke-width="1.600"/>
<path d="M38.300 833.600 H44.800 V827.500 Z" fill="#d4d4d4"/>
<!-- color picker -->
<path d="M31.500 855.500 L20.500 865.500" stroke="#c8c8c8" stroke-width="3.400" stroke-linecap="round"/>
<g transform="translate(34.300,851) rotate(-42)"><ellipse cx="0" cy="0" rx="6" ry="5" fill="#d88e6c"/><ellipse cx="1" cy="-1" rx="3.500" ry="2.800" fill="#e4a080"/></g>
<path d="M29.300 854.800 L32.800 858.300" stroke="#5a2c20" stroke-width="1"/>
<path d="M38.300 872.600 H44.800 V866.400 Z" fill="#d4d4d4"/>
<!-- ruler -->
<g transform="translate(29.200,896.200) rotate(-43)">
<rect x="-12.700" y="-3" width="25.400" height="6" rx="0.800" fill="#e8c848"/>
<path d="M-9.500 -3.200 V-0.500 M-6.300 -3.200 V0.500 M-3.100 -3.200 V-0.500 M0 -3.200 V0.500 M3.100 -3.200 V-0.500 M6.300 -3.200 V0.500 M9.500 -3.200 V-0.500" stroke="#6a3c10" stroke-width="1" transform="scale(1,-1)"/>
</g>
<path d="M38.300 911.400 H44.800 V905.200 Z" fill="#d4d4d4"/>
<!-- more -->
<path d="M26 933.100 L29 936.200 L26 939.300 M29.800 933.100 L32.800 936.200 L29.800 939.300" fill="none" stroke="#e4e4e4" stroke-width="1.300"/>
<!-- colour wells -->
<circle cx="28.900" cy="998.500" r="15.800" fill="#000" stroke="#3a3a3a" stroke-width="1.600"/>
<circle cx="28.900" cy="998.500" r="8.600" fill="#262626" stroke="#3a3a3a" stroke-width="1.600"/>
<circle cx="28.900" cy="1013" r="16" fill="#1a1a1a" stroke="#3a3a3a" stroke-width="1.600"/>
<circle cx="28.900" cy="1013" r="14.100" fill="#e9e9e9"/>
<path d="M22.800 1035.200 C24.500 1043 33.500 1043 35.300 1035.200" fill="none" stroke="#8a8a8a" stroke-width="1.300"/>
<path d="M21 1037.500 L22.600 1034.300 L25.500 1036.500 M32.600 1036.500 L35.500 1034.300 L37.100 1037.500" fill="none" stroke="#8a8a8a" stroke-width="1.300"/>
</svg>
<!-- right panels -->
<svg style="left:0;top:0" width="1920" height="1080">
<defs>
<linearGradient id="sr" x1="0" x2="1"><stop offset="0" stop-color="#00ebeb"/><stop offset="1" stop-color="#ffebeb"/></linearGradient>
<linearGradient id="sg" x1="0" x2="1"><stop offset="0" stop-color="#eb00eb"/><stop offset="1" stop-color="#ebffeb"/></linearGradient>
<linearGradient id="sb" x1="0" x2="1"><stop offset="0" stop-color="#ebeb00"/><stop offset="1" stop-color="#ebebff"/></linearGradient>
<linearGradient id="hue" x1="0" x2="1"><stop offset="0" stop-color="#f00"/><stop offset="0.1667" stop-color="#ff0"/><stop offset="0.3333" stop-color="#0f0"/><stop offset="0.5" stop-color="#0ff"/><stop offset="0.6667" stop-color="#00f"/><stop offset="0.8333" stop-color="#f0f"/><stop offset="1" stop-color="#f00"/></linearGradient>
<linearGradient id="wb" x1="0" x2="0" y1="0" y2="1"><stop offset="0" stop-color="#fff" stop-opacity="1"/><stop offset="0.5" stop-color="#fff" stop-opacity="0"/><stop offset="0.5" stop-color="#000" stop-opacity="0"/><stop offset="1" stop-color="#000" stop-opacity="1"/></linearGradient>
<linearGradient id="op" x1="0" x2="1"><stop offset="0" stop-color="#f0f0f0"/><stop offset="1" stop-color="#3a3a3a"/></linearGradient>
<pattern id="chk" width="10" height="10" patternUnits="userSpaceOnUse" x="1623" y="438"><rect width="10" height="10" fill="#000" fill-opacity="0"/><rect x="0" y="0" width="5" height="5" fill="#000" fill-opacity="0.08"/><rect x="5" y="5" width="5" height="5" fill="#000" fill-opacity="0.08"/></pattern>
</defs>
<rect x="1574" y="131" width="346" height="37" fill="#141414"/>
<rect x="1574" y="168" width="346" height="1.500" fill="#171717"/>
<rect x="1596" y="134" width="40" height="34" fill="#1e1e1e"/>
<rect x="1582.700" y="145.5" width="1.200" height="10" fill="#8a8a8a"/>
<rect x="1898" y="145.2" width="12" height="1.700" fill="#c8c8c8"/>
<rect x="1898" y="149.7" width="12" height="1.700" fill="#c8c8c8"/>
<rect x="1898" y="154.2" width="12" height="1.700" fill="#c8c8c8"/>
<circle cx="1608.800" cy="205.600" r="15.900" fill="#000" stroke="#3a3a3a" stroke-width="1.600"/>
<circle cx="1608.800" cy="205.600" r="8.600" fill="#222" stroke="#3a3a3a" stroke-width="1.600"/>
<circle cx="1624.100" cy="221.100" r="16" fill="#1b1b1b" stroke="#3a3a3a" stroke-width="1.600"/>
<circle cx="1624.100" cy="221.100" r="14.200" fill="#ebebeb"/>
<circle cx="1601.900" cy="229.100" r="7.300" fill="#ebebeb"/>
<clipPath id="cpn"><circle cx="1601.900" cy="229.100" r="7.300"/></clipPath>
<path d="M1595.500 235.500 L1608.300 222.700" stroke="#d8506a" stroke-width="2" clip-path="url(#cpn)"/>
<path d="M1626 192.600 C1631 194 1636 198 1637.300 203.300" fill="none" stroke="#9a9a9a" stroke-width="1.200"/>
<path d="M1628.500 189.700 L1625 192.300 L1627.300 196 M1634.400 201.700 L1637.400 204.400 L1640.200 201.200" fill="none" stroke="#9a9a9a" stroke-width="1.200"/>
<path d="M1654 208.600 L1664.800 197.800" stroke="#c8c8c8" stroke-width="3.200" stroke-linecap="round"/>
<g transform="translate(1670,193) rotate(-42)"><ellipse cx="0" cy="0" rx="6" ry="5" fill="#d8946c"/><ellipse cx="-5" cy="0" rx="2.500" ry="3.800" fill="#d8946c"/></g>
<circle cx="1685.900" cy="197.800" r="9" fill="#ff0808" stroke="#2c2426" stroke-width="1.500"/>
<rect x="1780" y="219" width="22" height="22" rx="2" fill="#141414"/>
<rect x="1786.500" y="228.800" width="7.600" height="6.400" rx="0.800" fill="#9c9c9c"/>
<path d="M1787.800 228.800 V226.500 A2.500 2.500 0 0 1 1792.800 226.500 V227.300" fill="none" stroke="#9c9c9c" stroke-width="1.200"/>
<rect x="1808.300" y="220" width="97.500" height="20.500" rx="4" fill="#272727"/>
<path d="M1893.200 228.400 L1897 232.200 L1900.800 228.400" fill="none" stroke="#e8e8e8" stroke-width="1.400"/>
<rect x="1608" y="254" width="243.300" height="11.300" rx="5.650" fill="url(#sr)"/>
<circle cx="1825.300" cy="259.65" r="7.100" fill="#ebebeb" stroke="#555" stroke-width="1"/>
<circle cx="1825.300" cy="259.65" r="4.600" fill="#e6e6e6" stroke="#8a8a8a" stroke-width="1.200"/>
<rect x="1857" y="247" width="50" height="25" rx="4" fill="#121212"/>
<rect x="1608" y="284" width="243.300" height="11.300" rx="5.650" fill="url(#sg)"/>
<circle cx="1825.300" cy="289.65" r="7.100" fill="#ebebeb" stroke="#555" stroke-width="1"/>
<circle cx="1825.300" cy="289.65" r="4.600" fill="#e6e6e6" stroke="#8a8a8a" stroke-width="1.200"/>
<rect x="1857" y="277" width="50" height="25" rx="4" fill="#121212"/>
<rect x="1608" y="314" width="243.300" height="11.300" rx="5.650" fill="url(#sb)"/>
<circle cx="1825.300" cy="319.65" r="7.100" fill="#ebebeb" stroke="#555" stroke-width="1"/>
<circle cx="1825.300" cy="319.65" r="4.600" fill="#e6e6e6" stroke="#8a8a8a" stroke-width="1.200"/>
<rect x="1857" y="307" width="50" height="25" rx="4" fill="#121212"/>
<rect x="1592" y="338" width="314" height="68" fill="url(#hue)"/>
<rect x="1592" y="338" width="314" height="68" fill="url(#wb)"/>
<circle cx="1606" cy="442.800" r="8.600" fill="#1a1a1a" stroke="#363636" stroke-width="1"/>
<circle cx="1606" cy="442.800" r="7.300" fill="#e9e9e9"/>
<rect x="1623" y="438" width="197" height="11" rx="5.500" fill="url(#op)"/>
<rect x="1623" y="438" width="197" height="11" rx="5.500" fill="url(#chk)"/>
<circle cx="1813.500" cy="443.500" r="6.200" fill="#3c3c3c" stroke="#f4f4f4" stroke-width="1.700"/>
<rect x="1828.500" y="431" width="53.500" height="22" rx="3" fill="#121212"/>
<rect x="1883" y="431" width="17.500" height="22" rx="3" fill="#282828"/>
<path d="M1888 439.500 L1891.700 443.200 L1895.400 439.500" fill="none" stroke="#e8e8e8" stroke-width="1.400"/>
<rect x="1574" y="463" width="346" height="37" fill="#141414"/>
<rect x="1574" y="500" width="346" height="1.500" fill="#171717"/>
<rect x="1596" y="466" width="52" height="34" fill="#1e1e1e"/>
<rect x="1582.700" y="477.5" width="1.200" height="10" fill="#8a8a8a"/>
<rect x="1898" y="477.2" width="12" height="1.700" fill="#c8c8c8"/>
<rect x="1898" y="481.7" width="12" height="1.700" fill="#c8c8c8"/>
<rect x="1898" y="486.2" width="12" height="1.700" fill="#c8c8c8"/>
<rect x="1643" y="506" width="67.500" height="23" rx="3" fill="#1a1a1a"/>
<rect x="1716.700" y="506" width="141.300" height="23" rx="3" fill="#1a1a1a"/>
<path d="M1697.500 515 L1701.200 518.700 L1704.900 515 M1844.500 515 L1848.200 518.700 L1851.900 515" fill="none" stroke="#7a7a7a" stroke-width="1.400"/>
<path d="M1877.66 515.18 L1880.22 515.91 L1880.22 518.09 L1877.66 518.82 L1877.58 519.00 L1878.87 521.34 L1877.34 522.87 L1875.00 521.58 L1874.82 521.66 L1874.09 524.22 L1871.91 524.22 L1871.18 521.66 L1871.00 521.58 L1868.66 522.87 L1867.13 521.34 L1868.42 519.00 L1868.34 518.82 L1865.78 518.09 L1865.78 515.91 L1868.34 515.18 L1868.42 515.00 L1867.13 512.66 L1868.66 511.13 L1871.00 512.42 L1871.18 512.34 L1871.91 509.78 L1874.09 509.78 L1874.82 512.34 L1875.00 512.42 L1877.34 511.13 L1878.87 512.66 L1877.58 515.00 Z" fill="#b4b4b4"/>
<rect x="1871.300" y="515.300" width="3.400" height="3.400" rx="0.800" fill="#1e1e1e"/>
<rect x="1896.400" y="516.200" width="9.400" height="8" rx="1" fill="#b4b4b4"/>
<path d="M1898.400 516.800 V512.600 A2.700 2.700 0 0 1 1903.800 512.600 V516.800" fill="none" stroke="#b4b4b4" stroke-width="1.400"/>
<rect x="1574" y="536" width="324" height="277" fill="#070707"/>
<rect x="1898" y="536" width="22" height="281" fill="#252525"/>
<rect x="1574" y="813" width="324" height="4" fill="#181818"/>
<rect x="1575" y="537" width="9.300" height="45" fill="#1c1c1c"/>
<rect x="1585.300" y="537" width="20" height="45" fill="#1c1c1c"/>
<rect x="1606.300" y="537" width="44.700" height="45" fill="#1c1c1c"/>
<rect x="1652" y="537" width="245" height="45" fill="#1c1c1c"/>
<rect x="1608" y="539" width="41" height="41" fill="#141414"/>
<circle cx="1628.300" cy="559.4" r="20.200" fill="#ebebeb"/>
<rect x="1590.200" y="552" width="5.300" height="5.300" fill="#9c9c9c"/>
<path d="M1596.600 559 L1599.200 554 L1601.800 559 Z" fill="#9c9c9c"/>
<circle cx="1592.800" cy="563" r="2.700" fill="#9c9c9c"/>
<path d="M1599.200 560.3 L1601.700 563.6 L1599.200 566.3 L1596.700 563.6 Z" fill="#9c9c9c"/>
<circle cx="1878.600" cy="559.8" r="5.400" fill="#9c9c9c"/>
<rect x="1575" y="583" width="9.300" height="45" fill="#1c1c1c"/>
<rect x="1585.300" y="583" width="20" height="45" fill="#1c1c1c"/>
<rect x="1606.300" y="583" width="44.700" height="45" fill="#1c1c1c"/>
<rect x="1652" y="583" width="245" height="45" fill="#1c1c1c"/>
<rect x="1608" y="585" width="41" height="41" fill="#141414"/>
<circle cx="1628.300" cy="605.4" r="20.200" fill="#ebebeb"/>
<rect x="1590.200" y="598" width="5.300" height="5.300" fill="#9c9c9c"/>
<path d="M1596.600 605 L1599.200 600 L1601.800 605 Z" fill="#9c9c9c"/>
<circle cx="1592.800" cy="609" r="2.700" fill="#9c9c9c"/>
<path d="M1599.200 606.3 L1601.700 609.6 L1599.200 612.3 L1596.700 609.6 Z" fill="#9c9c9c"/>
<circle cx="1878.600" cy="605.8" r="5.400" fill="#9c9c9c"/>
<rect x="1575" y="629" width="9.300" height="45" fill="#1c1c1c"/>
<rect x="1585.300" y="629" width="20" height="45" fill="#1c1c1c"/>
<rect x="1606.300" y="629" width="44.700" height="45" fill="#1c1c1c"/>
<rect x="1652" y="629" width="245" height="45" fill="#1c1c1c"/>
<rect x="1608" y="631" width="41" height="41" fill="#141414"/>
<circle cx="1628.300" cy="651.4" r="20.200" fill="#ebebeb"/>
<rect x="1590.200" y="644" width="5.300" height="5.300" fill="#9c9c9c"/>
<path d="M1596.600 651 L1599.200 646 L1601.800 651 Z" fill="#9c9c9c"/>
<circle cx="1592.800" cy="655" r="2.700" fill="#9c9c9c"/>
<path d="M1599.200 652.3 L1601.700 655.6 L1599.200 658.3 L1596.700 655.6 Z" fill="#9c9c9c"/>
<circle cx="1878.600" cy="651.8" r="5.400" fill="#9c9c9c"/>
<rect x="1575" y="675" width="9.300" height="45" fill="#1c1c1c"/>
<rect x="1585.300" y="675" width="20" height="45" fill="#1c1c1c"/>
<rect x="1606.300" y="675" width="44.700" height="45" fill="#1c1c1c"/>
<rect x="1652" y="675" width="245" height="45" fill="#1c1c1c"/>
<rect x="1608" y="677" width="41" height="41" fill="#141414"/>
<circle cx="1628.300" cy="697.4" r="20.200" fill="#ebebeb"/>
<rect x="1590.200" y="690" width="5.300" height="5.300" fill="#9c9c9c"/>
<path d="M1596.600 697 L1599.200 692 L1601.800 697 Z" fill="#9c9c9c"/>
<circle cx="1592.800" cy="701" r="2.700" fill="#9c9c9c"/>
<path d="M1599.200 698.3 L1601.700 701.6 L1599.200 704.3 L1596.700 701.6 Z" fill="#9c9c9c"/>
<circle cx="1878.600" cy="697.8" r="5.400" fill="#9c9c9c"/>
<rect x="1575" y="721" width="9.300" height="45" fill="#1c1c1c"/>
<rect x="1585.300" y="721" width="20" height="45" fill="#1c1c1c"/>
<rect x="1606.300" y="721" width="44.700" height="45" fill="#1c1c1c"/>
<rect x="1652" y="721" width="245" height="45" fill="#1c1c1c"/>
<rect x="1608" y="723" width="41" height="41" fill="#141414"/>
<circle cx="1628.300" cy="743.4" r="20.200" fill="#ebebeb"/>
<rect x="1590.200" y="736" width="5.300" height="5.300" fill="#9c9c9c"/>
<path d="M1596.600 743 L1599.200 738 L1601.800 743 Z" fill="#9c9c9c"/>
<circle cx="1592.800" cy="747" r="2.700" fill="#9c9c9c"/>
<path d="M1599.200 744.3 L1601.700 747.6 L1599.200 750.3 L1596.700 747.6 Z" fill="#9c9c9c"/>
<circle cx="1878.600" cy="743.8" r="5.400" fill="#9c9c9c"/>
<rect x="1575" y="767" width="9.300" height="45" fill="#1c1c1c"/>
<rect x="1585.300" y="767" width="20" height="45" fill="#1c1c1c"/>
<rect x="1606.300" y="767" width="44.700" height="45" fill="#1c1c1c"/>
<rect x="1652" y="767" width="245" height="45" fill="#1c1c1c"/>
<rect x="1608" y="769" width="41" height="41" fill="#141414"/>
<circle cx="1628.300" cy="789.4" r="20.200" fill="#ebebeb"/>
<rect x="1590.200" y="782" width="5.300" height="5.300" fill="#9c9c9c"/>
<path d="M1596.600 789 L1599.200 784 L1601.800 789 Z" fill="#9c9c9c"/>
<circle cx="1592.800" cy="793" r="2.700" fill="#9c9c9c"/>
<path d="M1599.200 790.3 L1601.700 793.6 L1599.200 796.3 L1596.700 793.6 Z" fill="#9c9c9c"/>
<circle cx="1878.600" cy="789.8" r="5.400" fill="#9c9c9c"/>
<path d="M1909.600 543 L1914.200 552 L1905 552 Z" fill="#4e4e4e"/>
<rect x="1905" y="724" width="9.200" height="71" rx="4.600" fill="#626262"/>
<path d="M1909.600 810.500 L1914.200 802 L1905 802 Z" fill="#4e4e4e"/>
<rect x="1580.800" y="819.300" width="25.200" height="24.400" rx="2" fill="#141414"/>
<path d="M1590.500 837.500 H1597.500 Q1599.800 837.500 1599.800 835.200 V828.200 M1593.500 840.500 H1600.500 Q1602.800 840.500 1602.800 838.200 V831.200" fill="none" stroke="#aaaaaa" stroke-width="1.400"/>
<rect x="1585" y="822.900" width="11.800" height="11.600" rx="2" fill="none" stroke="#aaaaaa" stroke-width="1.400"/>
<rect x="1713.200" y="824" width="18" height="16" rx="1.500" fill="#aaaaaa"/><circle cx="1722.100" cy="832" r="4.400" fill="#1a1a1a"/>
<circle cx="1747.800" cy="832" r="9.100" fill="none" stroke="#aaaaaa" stroke-width="1.200"/>
<path d="M1743.200 836.600 A6.500 6.500 0 0 0 1752.400 827.400 Z" fill="#aaaaaa"/>
<path d="M1764.200 822.800 H1779.600 M1764.200 841.500 H1779.600" stroke="#aaaaaa" stroke-width="1.100"/>
<path d="M1765.500 837.800 V826.500 H1770.500 M1765.500 832 H1769.500" fill="none" stroke="#aaaaaa" stroke-width="2.300"/>
<path d="M1770.500 826.500 L1778.800 837.800 M1778.800 826.500 L1770.500 837.800" fill="none" stroke="#aaaaaa" stroke-width="2.200"/>
<path d="M1795.500 823.800 C1799 822.800 1802 823.300 1804 825 C1806.500 830 1807 835 1806.300 839.500 C1801 841 1796 841 1790.800 840.200 C1793.500 835 1795.300 829 1795.500 823.800 Z" fill="none" stroke="#aaaaaa" stroke-width="1.100"/>
<path d="M1798.700 823.300 C1798.700 829 1797.500 835 1796 840.700 M1801.700 823.800 C1802.500 829 1802 835 1801.300 840.700 M1794.800 829.500 C1798 828.800 1802 829 1805.500 830.300 M1793 835 C1797 834.300 1802 834.500 1806.500 835.300" fill="none" stroke="#aaaaaa" stroke-width="1"/>
<path d="M1856 823.300 H1846.500 Q1845.500 823.300 1845.500 824.300 V840.200 Q1845.500 841.200 1846.500 841.200 H1858 Q1859 841.200 1859 840.200 V830" fill="none" stroke="#aaaaaa" stroke-width="1.200"/>
<path d="M1848.300 829.800 H1856.200 M1848.300 833.500 H1856.200 M1848.300 837.200 H1856.200" stroke="#aaaaaa" stroke-width="1.800"/>
<path d="M1856.700 825.500 H1862 M1859.350 822.800 V828.200" stroke="#aaaaaa" stroke-width="1.200"/>
<rect x="1871.400" y="823.300" width="13.200" height="17.900" rx="1" fill="none" stroke="#aaaaaa" stroke-width="1.200"/>
<rect x="1874.2" y="825.8" width="2.600" height="2.600" fill="#aaaaaa"/>
<rect x="1879.4" y="825.8" width="2.600" height="2.600" fill="#aaaaaa"/>
<rect x="1876.8" y="828.4" width="2.600" height="2.600" fill="#aaaaaa"/>
<rect x="1874.2" y="831.0" width="2.600" height="2.600" fill="#aaaaaa"/>
<rect x="1879.4" y="831.0" width="2.600" height="2.600" fill="#aaaaaa"/>
<rect x="1876.8" y="833.6" width="2.600" height="2.600" fill="#aaaaaa"/>
<rect x="1874.2" y="836.2" width="2.600" height="2.600" fill="#aaaaaa"/>
<rect x="1879.4" y="836.2" width="2.600" height="2.600" fill="#aaaaaa"/>
<path d="M1894.900 826 H1909.300 M1899 826 V823.300 H1905.200 V826 M1896.400 826 V840.200 Q1896.400 841.200 1897.400 841.200 H1906.800 Q1907.800 841.200 1907.800 840.200 V826" fill="none" stroke="#aaaaaa" stroke-width="1.200"/>
<path d="M1900.300 828.500 V838.500 M1903.900 828.500 V838.500" stroke="#aaaaaa" stroke-width="1.300"/>
<rect x="1574" y="849" width="346" height="36" fill="#141414"/>
<rect x="1574" y="885" width="346" height="1.500" fill="#171717"/>
<rect x="1596" y="852" width="40" height="33" fill="#1e1e1e"/>
<rect x="1582.700" y="863.0" width="1.200" height="10" fill="#8a8a8a"/>
<rect x="1898" y="862.7" width="12" height="1.700" fill="#c8c8c8"/>
<rect x="1898" y="867.2" width="12" height="1.700" fill="#c8c8c8"/>
<rect x="1898" y="871.7" width="12" height="1.700" fill="#c8c8c8"/>
<rect x="1599.500" y="932.500" width="36.800" height="36.800" fill="#494949"/>
<rect x="1595" y="928" width="7.400" height="7.400" fill="#494949"/>
<rect x="1595" y="947" width="7.400" height="7.400" fill="#494949"/>
<rect x="1595" y="966.5" width="7.400" height="7.400" fill="#494949"/>
<rect x="1614" y="928" width="7.400" height="7.400" fill="#494949"/>
<rect x="1614" y="966.5" width="7.400" height="7.400" fill="#494949"/>
<rect x="1633.2" y="928" width="7.400" height="7.400" fill="#494949"/>
<rect x="1633.2" y="947" width="7.400" height="7.400" fill="#494949"/>
<rect x="1633.2" y="966.5" width="7.400" height="7.400" fill="#494949"/>
<rect x="1679" y="901" width="79" height="23" rx="3" fill="#1a1a1a"/>
<rect x="1679" y="931" width="79" height="23" rx="3" fill="#1a1a1a"/>
<rect x="1679" y="969" width="79" height="23" rx="3" fill="#1a1a1a"/>
<rect x="1797" y="901" width="79" height="23" rx="3" fill="#1a1a1a"/>
<rect x="1797" y="931" width="79" height="23" rx="3" fill="#1a1a1a"/>
<rect x="1797" y="969" width="79" height="23" rx="3" fill="#1a1a1a"/>
<path d="M1745.600 978.200 L1749.700 982.300 L1753.800 978.200 M1863.600 978.200 L1867.700 982.300 L1871.800 978.200" fill="none" stroke="#8a8a8a" stroke-width="1.400"/>
<rect x="1893.300" y="916" width="6.400" height="9" rx="1.600" fill="none" stroke="#8e8e8e" stroke-width="1.100"/>
<rect x="1893.300" y="931" width="6.400" height="9" rx="1.600" fill="none" stroke="#8e8e8e" stroke-width="1.100"/>
<path d="M1891.500 928 H1901.500" stroke="#1e1e1e" stroke-width="4"/>
<path d="M1891.500 928 H1901.500" stroke="#8e8e8e" stroke-width="1.100"/>
<rect x="1822.500" y="1003" width="36.300" height="31.500" rx="4" fill="#2a2a2a"/>
<rect x="1860" y="1003" width="17.500" height="31.500" rx="4" fill="#2a2a2a"/>
<rect x="1831.800" y="1010.500" width="18.500" height="16.200" rx="1.500" fill="none" stroke="#6c6c6c" stroke-width="1.200" stroke-dasharray="5 2.500"/>
<rect x="1831.200" y="1018" width="11.300" height="9.300" rx="2" fill="#6c6c6c" stroke="#2a2a2a" stroke-width="1"/>
<path d="M1864 1017.200 L1868 1021.200 L1872 1017.200" fill="none" stroke="#e8e8e8" stroke-width="1.400"/>
</svg>

<!-- texts -->
<div class="t" style="left:70.0px;top:14.0px;font-size:14px;color:#f4f4f4;font-weight:normal;transform:scaleX(0.7890)">ファイル(F)</div>
<div class="t" style="left:161.0px;top:14.0px;font-size:14px;color:#f4f4f4;font-weight:normal;transform:scaleX(0.9920)">編集(E)</div>
<div class="t" style="left:240.0px;top:14.0px;font-size:14px;color:#f4f4f4;font-weight:normal;transform:scaleX(0.8255)">テキスト(T)</div>
<div class="t" style="left:333.3px;top:14.0px;font-size:14px;color:#f4f4f4;font-weight:normal;transform:scaleX(0.8068)">レイヤー(L)</div>
<div class="t" style="left:424.0px;top:14.0px;font-size:14px;color:#f4f4f4;font-weight:normal;transform:scaleX(1.0006)">選択(S)</div>
<div class="t" style="left:503.3px;top:14.0px;font-size:14px;color:#f4f4f4;font-weight:normal;transform:scaleX(1.0156)">表示(V)</div>
<div class="t" style="left:582.7px;top:14.0px;font-size:14px;color:#f4f4f4;font-weight:normal;transform:scaleX(0.8244)">ウィンドウ(W)</div>
<div class="t" style="left:691.7px;top:14.0px;font-size:14px;color:#f4f4f4;font-weight:normal;transform:scaleX(0.8952)">ヘルプ(H)</div>
<div class="t" style="left:11.3px;top:107.0px;font-size:14.5px;color:#e8e8e8;font-weight:normal;transform:scaleX(0.8817)">選択なし</div>
<div class="t" style="left:108.7px;top:107.0px;font-size:14.5px;color:#b4b4b4;font-weight:normal;transform:scaleX(0.8793)">自動選択:</div>
<div class="t" style="left:181.3px;top:107.0px;font-size:14.5px;color:#f0f0f0;font-weight:normal;transform:scaleX(0.6720)">デフォルト</div>
<div class="t" style="left:313.7px;top:107.2px;font-size:14.5px;color:#e8e8e8;font-weight:normal;transform:scaleX(0.7858)">ドキュメント設定...</div>
<div class="t" style="left:474.7px;top:107.2px;font-size:14.5px;color:#e8e8e8;font-weight:normal;transform:scaleX(0.9455)">設定...</div>
<div class="t" style="left:70.8px;top:143.4px;font-size:13.5px;color:#dcdcdc;font-weight:normal;transform:scaleX(0.8882)">木星シール [変更あり] (302.0%)</div>
<div class="t" style="left:1602.1px;top:141.0px;font-size:15px;color:#f4f4f4;font-weight:normal;transform:scaleX(0.6222)">カラー</div>
<div class="t" style="left:1642.3px;top:141.0px;font-size:15px;color:#b0b0b0;font-weight:normal;transform:scaleX(0.6507)">スウォッチ</div>
<div class="t" style="left:1703.0px;top:141.0px;font-size:15px;color:#b0b0b0;font-weight:normal;transform:scaleX(0.9178)">境界線</div>
<div class="t" style="left:1813.4px;top:224.0px;font-size:14px;color:#e8e8e8;font-weight:normal;transform:scaleX(0.8371)">RGB</div>
<div class="t" style="left:1592.4px;top:253.2px;font-size:12.5px;color:#a8a8a8;font-weight:normal;transform:scaleX(0.7920)">R:</div>
<div class="t" style="left:1591.2px;top:283.2px;font-size:12.5px;color:#a8a8a8;font-weight:normal;transform:scaleX(0.8407)">G:</div>
<div class="t" style="left:1592.4px;top:313.2px;font-size:12.5px;color:#a8a8a8;font-weight:normal;transform:scaleX(0.8381)">B:</div>
<div class="t" style="left:1864.0px;top:254.2px;font-size:13.5px;color:#e4e4e4;font-weight:normal;transform:scaleX(0.9764)">235</div>
<div class="t" style="left:1864.0px;top:284.2px;font-size:13.5px;color:#e4e4e4;font-weight:normal;transform:scaleX(0.9764)">235</div>
<div class="t" style="left:1864.0px;top:314.2px;font-size:13.5px;color:#e4e4e4;font-weight:normal;transform:scaleX(0.9764)">235</div>
<div class="t" style="left:1591.0px;top:413.8px;font-size:13px;color:#a8a8a8;font-weight:normal;transform:scaleX(0.9635)">不透明度</div>
<div class="t" style="left:1835.6px;top:435.9px;font-size:13.5px;color:#e4e4e4;font-weight:normal;transform:scaleX(0.9509)">100 %</div>
<div class="t" style="left:1602.4px;top:473.1px;font-size:14.5px;color:#f4f4f4;font-weight:normal;transform:scaleX(0.6600)">レイヤー</div>
<div class="t" style="left:1654.2px;top:473.1px;font-size:14.5px;color:#b0b0b0;font-weight:normal;transform:scaleX(0.6733)">ブラシ</div>
<div class="t" style="left:1697.6px;top:473.1px;font-size:14.5px;color:#b0b0b0;font-weight:normal;transform:scaleX(0.6851)">クイックFX</div>
<div class="t" style="left:1763.2px;top:473.1px;font-size:14.5px;color:#b0b0b0;font-weight:normal;transform:scaleX(0.6983)">スタイル</div>
<div class="t" style="left:1584.2px;top:510.5px;font-size:13px;color:#6e6e6e;font-weight:normal;transform:scaleX(0.9402)">不透明度:</div>
<div class="t" style="left:1650.2px;top:512.0px;font-size:13.5px;color:#787878;font-weight:normal;transform:scaleX(0.9378)">100 %</div>
<div class="t" style="left:1722.8px;top:510.5px;font-size:13px;color:#6e6e6e;font-weight:normal;transform:scaleX(1.0269)">標準</div>
<div class="t" style="left:1656.6px;top:552.2px;font-size:14px;color:#a4a4a4;font-weight:normal;transform:scaleX(1.0143)">楕円</div>
<div class="t" style="left:1656.6px;top:598.2px;font-size:14px;color:#a4a4a4;font-weight:normal;transform:scaleX(1.0143)">楕円</div>
<div class="t" style="left:1656.6px;top:644.2px;font-size:14px;color:#a4a4a4;font-weight:normal;transform:scaleX(1.0143)">楕円</div>
<div class="t" style="left:1656.6px;top:690.2px;font-size:14px;color:#a4a4a4;font-weight:normal;transform:scaleX(1.0143)">楕円</div>
<div class="t" style="left:1656.6px;top:736.2px;font-size:14px;color:#a4a4a4;font-weight:normal;transform:scaleX(1.0143)">楕円</div>
<div class="t" style="left:1656.6px;top:782.2px;font-size:14px;color:#a4a4a4;font-weight:normal;transform:scaleX(1.0143)">楕円</div>
<div class="t" style="left:1602.5px;top:859.0px;font-size:14.5px;color:#f4f4f4;font-weight:normal;transform:scaleX(0.9000)">変形</div>
<div class="t" style="left:1642.0px;top:859.0px;font-size:14.5px;color:#b0b0b0;font-weight:normal;transform:scaleX(0.6533)">ナビゲータ</div>
<div class="t" style="left:1704.0px;top:859.0px;font-size:14.5px;color:#b0b0b0;font-weight:normal;transform:scaleX(0.9000)">履歴</div>
<div class="t" style="left:1661.3px;top:907.8px;font-size:13.5px;color:#6e6e6e;font-weight:normal;transform:scaleX(0.8382)">X:</div>
<div class="t" style="left:1661.3px;top:937.8px;font-size:13.5px;color:#6e6e6e;font-weight:normal;transform:scaleX(0.8905)">Y:</div>
<div class="t" style="left:1661.3px;top:975.2px;font-size:13.5px;color:#6e6e6e;font-weight:normal;transform:scaleX(0.7926)">R:</div>
<div class="t" style="left:1775.0px;top:907.8px;font-size:13.5px;color:#6e6e6e;font-weight:normal;transform:scaleX(0.9231)">W:</div>
<div class="t" style="left:1777.5px;top:937.8px;font-size:13.5px;color:#6e6e6e;font-weight:normal;transform:scaleX(0.9259)">H:</div>
<div class="t" style="left:1780.0px;top:975.2px;font-size:13.5px;color:#6e6e6e;font-weight:normal;transform:scaleX(0.7834)">S:</div>
<div class="t" style="left:1685.0px;top:907.5px;font-size:13.5px;color:#686868;font-weight:normal;transform:scaleX(1.0222)">0 mm</div>
<div class="t" style="left:1685.0px;top:937.5px;font-size:13.5px;color:#686868;font-weight:normal;transform:scaleX(1.0222)">0 mm</div>
<div class="t" style="left:1685.0px;top:975.2px;font-size:13.5px;color:#686868;font-weight:normal;transform:scaleX(0.9777)">0 °</div>
<div class="t" style="left:1803.0px;top:907.5px;font-size:13.5px;color:#686868;font-weight:normal;transform:scaleX(1.0222)">0 mm</div>
<div class="t" style="left:1803.0px;top:937.5px;font-size:13.5px;color:#686868;font-weight:normal;transform:scaleX(1.0222)">0 mm</div>
<div class="t" style="left:1803.0px;top:975.2px;font-size:13.5px;color:#686868;font-weight:normal;transform:scaleX(0.9597)">0 °</div>
<div class="t" style="left:29.8px;top:1057.3px;font-size:14px;color:#f4f4f4;font-weight:bold;transform:scaleX(0.7732)">ドラッグ</div>
<div class="t" style="left:74.0px;top:1057.3px;font-size:14px;color:#a6a6a6;font-weight:normal;transform:scaleX(0.8016)">でマーキー選択します。オブジェクトを</div>
<div class="t" style="left:277.3px;top:1057.3px;font-size:14px;color:#f4f4f4;font-weight:bold;transform:scaleX(0.7804)">クリック</div>
<div class="t" style="left:322.0px;top:1057.3px;font-size:14px;color:#a6a6a6;font-weight:normal;transform:scaleX(0.8638)">して選択します。マーキー選択中の</div>
<div class="t" style="left:516.2px;top:1057.3px;font-size:14px;color:#f4f4f4;font-weight:bold;transform:scaleX(0.9865)">Ctrl</div>
<div class="t" style="left:541.5px;top:1057.3px;font-size:14px;color:#a6a6a6;font-weight:normal;transform:scaleX(0.8984)">で交差動作を切り替えます。</div>
</body></html>
